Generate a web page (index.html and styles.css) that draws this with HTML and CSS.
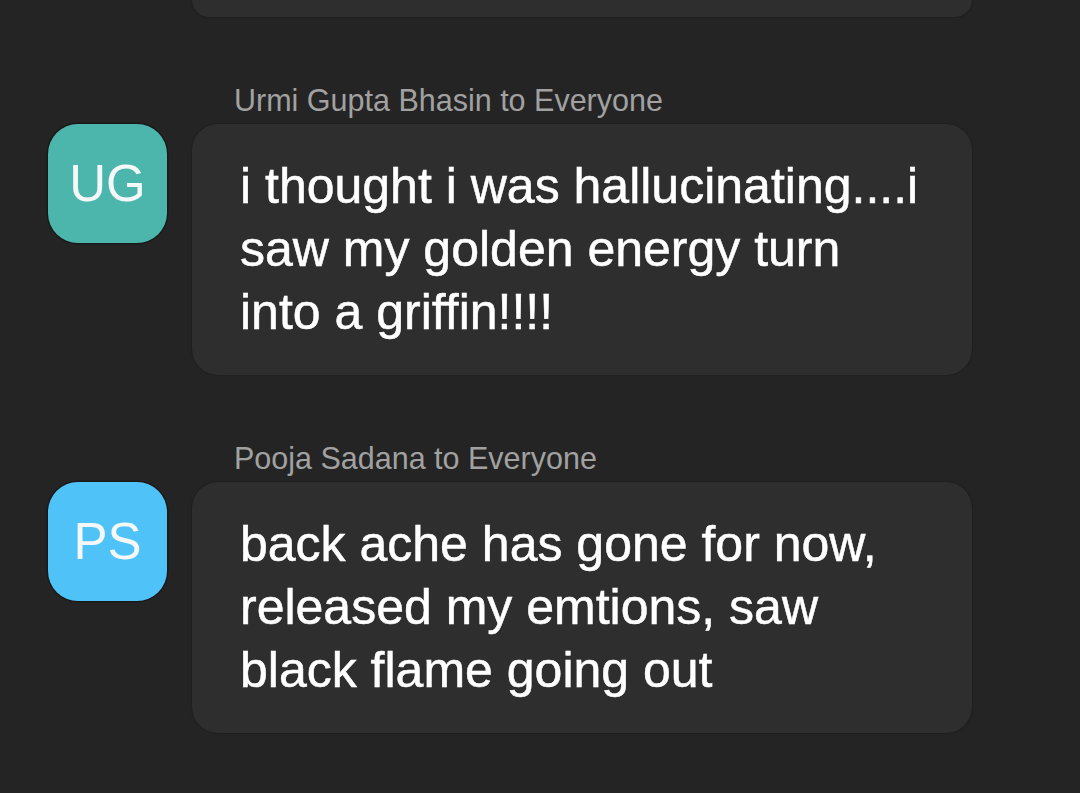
FILE: index.html
```html
<!DOCTYPE html>
<html lang="en">
<head>
<meta charset="utf-8">
<title>Chat</title>
<link rel="stylesheet" href="styles.css">
</head>
<body>
<main class="chat">
  <div class="msg msg-partial">
    <div class="bubble bubble-partial"></div>
  </div>
  <div class="msg">
    <div class="sender">Urmi Gupta Bhasin to Everyone</div>
    <div class="avatar avatar-teal">UG</div>
    <div class="bubble">i thought i was hallucinating....i saw my golden energy turn into a griffin!!!!</div>
  </div>
  <div class="msg">
    <div class="sender">Pooja Sadana to Everyone</div>
    <div class="avatar avatar-blue">PS</div>
    <div class="bubble">back ache has gone for now, released my emtions, saw black flame going out</div>
  </div>
</main>
</body>
</html>
```
FILE: styles.css
```css
html, body {
  margin: 0;
  padding: 0;
  background: #242424;
}
body {
  font-family: "Liberation Sans", Arial, sans-serif;
  width: 1080px;
  height: 793px;
  overflow: hidden;
}
.chat {
  display: flex;
  flex-direction: column;
  gap: 66px;
  padding-left: 48px;
}
.msg {
  display: grid;
  grid-template-columns: 119px 780px;
  column-gap: 25px;
  row-gap: 7px;
}
.sender {
  grid-column: 2;
  grid-row: 1;
  padding-left: 42px;
  font-size: 30.5px;
  line-height: 34px;
  color: #a1a1a1;
}
.avatar {
  grid-column: 1;
  grid-row: 2;
  width: 119px;
  height: 119px;
  border-radius: 30px;
  display: flex;
  align-items: center;
  justify-content: center;
  color: #f4f8f8;
  font-size: 51px;
  box-shadow: 0 0 0 1.5px rgba(0, 0, 0, 0.3);
}
.avatar-teal { background: #4db6ac; }
.avatar-blue { background: #4fc3f7; }
.bubble {
  grid-column: 2;
  grid-row: 2;
  background: #2e2e2e;
  border-radius: 26px;
  padding: 31px 48px;
  color: #ffffff;
  font-size: 50px;
  line-height: 63px;
  -webkit-text-stroke: 0.5px #ffffff;
  box-shadow: 0 0 2px rgba(0, 0, 0, 0.45);
}
.msg-partial .bubble {
  grid-row: 1;
}
.bubble-partial {
  height: 17px;
  padding: 0;
  border-radius: 0 0 26px 26px;
}
```
